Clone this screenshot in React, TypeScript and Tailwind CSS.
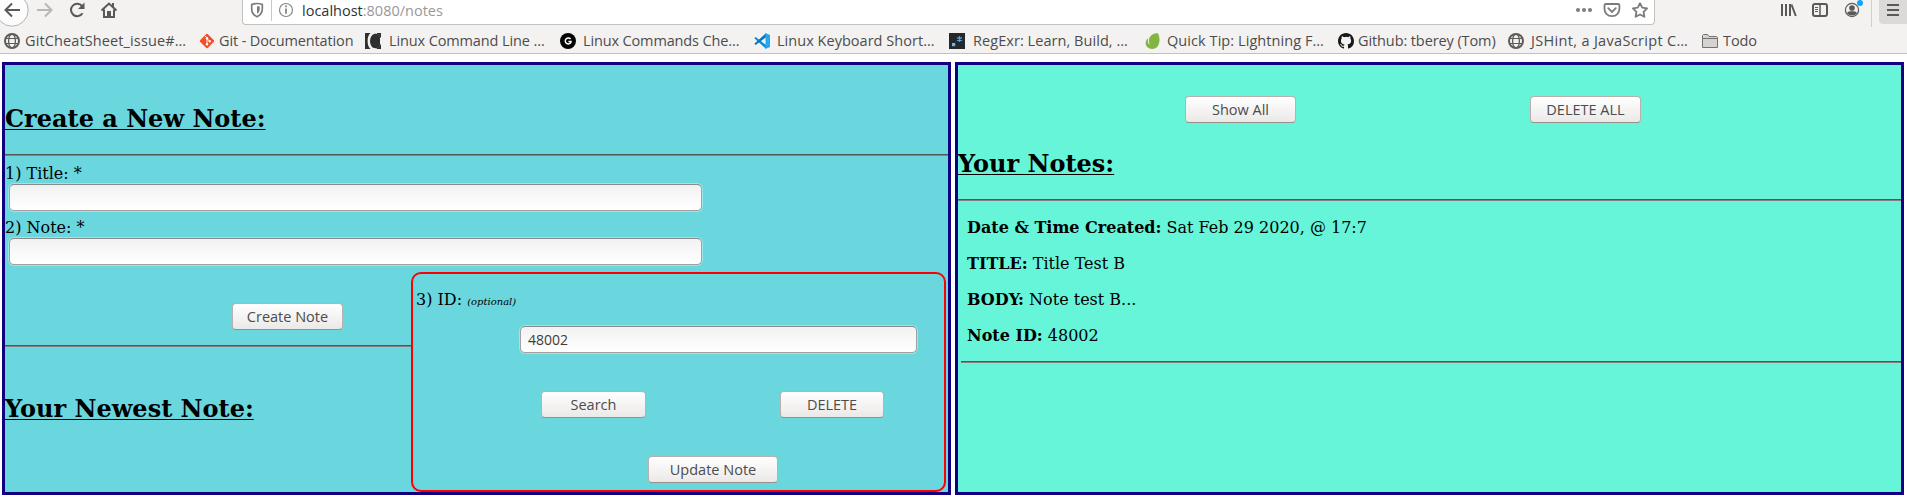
import React from "react";

const ui = "font-['Open_Sans','Noto_Sans',sans-serif]";

function Globe() {
  return (
    <svg width="16" height="16" viewBox="0 0 16 16" fill="none" stroke="#5e5d5b">
      <circle cx="8" cy="8" r="7" strokeWidth="2" />
      <ellipse cx="8" cy="8" rx="3.4" ry="7" strokeWidth="1.3" />
      <path d="M1.5 5.5h13M1.5 10.5h13" strokeWidth="1.2" />
    </svg>
  );
}

function GitLogo() {
  return (
    <svg width="16" height="16" viewBox="0 0 16 16">
      <rect x="2.6" y="2.6" width="10.8" height="10.8" rx="1" fill="#f64d27" transform="rotate(45 8 8)" />
      <path d="M6 2.8l2 2v6.6M8 5.6l3 3" stroke="#fff" strokeWidth="1" fill="none" />
      <circle cx="8" cy="5.2" r="1.2" fill="#fff" />
      <circle cx="8" cy="11.3" r="1.2" fill="#fff" />
      <circle cx="10.8" cy="8.3" r="1.2" fill="#fff" />
    </svg>
  );
}

function CommandLogo() {
  return (
    <svg width="16" height="16" viewBox="0 0 16 16">
      <path d="M0 0h5.500C3.400 2 2.600 4.500 2.600 8s.8 6 2.900 8H0z" fill="#2f2f2f" />
      <path d="M16 0v4.500h-1C14.600 2.500 13.600 1 12 1 9 0 5.500 2 5 8c.3 5.500 3 8 7 7 1.600-.4 2.600-1.500 3-3.500h1V16h-4V0z" fill="#2f2f2f" />
      <path d="M12 1c2 0 3 1.500 3 3.500v7c-.4 2-1.400 3.500-3 3.500z" fill="#2f2f2f" />
    </svg>
  );
}

function GLogo() {
  return (
    <svg width="16" height="16" viewBox="0 0 16 16">
      <circle cx="8" cy="8" r="8" fill="#050505" />
      <path d="M10.600 6A3 3 0 1 0 11 9.200V8.400H8.400" fill="none" stroke="#fff" strokeWidth="1.500" />
    </svg>
  );
}

function CodeLogo() {
  return (
    <svg width="16" height="16" viewBox="0 0 16 16">
      <path d="M0.300 5.200L1.700 4 12 12v3.800z" fill="#0d8bd4" />
      <path d="M0.300 10.800L1.700 12 12 4.200V0.200z" fill="#0877bd" />
      <path d="M11.500 0L16 1.900v12.200L11.500 16z" fill="#27a7f0" />
    </svg>
  );
}

function RegexLogo() {
  return (
    <svg width="16" height="16" viewBox="0 0 16 16">
      <path d="M0 0h16v16H0z" fill="#25292d" />
      <path d="M3 10h3.200v3.200H3z" fill="#70b7e8" />
      <path d="M10.500 3v6M8 4.500l5 3M13 4.500l-5 3" stroke="#5fa3d3" strokeWidth="1.300" />
    </svg>
  );
}

function LeafLogo() {
  return (
    <svg width="16" height="16" viewBox="0 0 16 16" fill="#82b541">
      <path d="M12.300.2C9 0 5.200 2.200 4.200 5.400c-.5 2-.2 4.200.3 5.600.2.500-.2.600-.5.200-.9-1-1.300-3.200-1-5.300.1-.5-.3-.6-.6-.2C.600 8-.2 11 1.600 13.300c2.600 3.500 8.600 3.400 11.100 0 2.800-4 1.800-10 .6-12.400-.2-.4-.5-.6-1-.7z" />
    </svg>
  );
}

function GithubLogo() {
  return (
    <svg width="16" height="16" viewBox="0 0 16 16" fill="#191717">
      <path d="M8 0C3.580 0 0 3.580 0 8c0 3.540 2.290 6.530 5.470 7.590.4.070.550-.170.550-.380 0-.190-.010-.820-.010-1.490-2.010.370-2.530-.490-2.690-.940-.090-.230-.480-.940-.820-1.130-.280-.150-.680-.520-.010-.530.630-.010 1.080.580 1.230.820.720 1.210 1.870.870 2.330.660.070-.520.280-.870.510-1.070-1.780-.2-3.640-.890-3.640-3.950 0-.870.310-1.590.820-2.150-.080-.2-.360-1.020.080-2.120 0 0 .670-.210 2.200.820a7.600 7.600 0 0 1 4 0c1.530-1.040 2.200-.820 2.200-.820.440 1.100.160 1.920.080 2.120.510.560.820 1.270.820 2.150 0 3.070-1.870 3.750-3.650 3.950.290.250.540.730.540 1.480 0 1.070-.010 1.930-.010 2.200 0 .210.150.460.550.380A8 8 0 0 0 16 8c0-4.420-3.580-8-8-8z" />
    </svg>
  );
}

function FolderIcon() {
  return (
    <svg width="16" height="16" viewBox="0 0 16 16">
      <path d="M.5 14.500V2.500L1.500 1.500h4l1.500 2h7.500l1 1v10z" fill="#d5d3d1" stroke="#737270" />
      <path d="M1 5.500h14" stroke="#737270" />
    </svg>
  );
}

const bookmarks = [
  { label: "GitCheatSheet_issue#…", Icon: Globe, box: "w-[195px] gap-[5px]", track: "tracking-[0.12px]" },
  { label: "Git - Documentation", Icon: GitLogo, box: "w-[166px] gap-[4px]", track: "tracking-[-0.12px]" },
  { label: "Linux Command Line …", Icon: CommandLogo, box: "w-[195px] gap-[8px]", track: "tracking-[-0.12px]" },
  { label: "Linux Commands Che…", Icon: GLogo, box: "w-[194px] gap-[7px]", track: "tracking-[-0.14px]" },
  { label: "Linux Keyboard Short…", Icon: CodeLogo, box: "w-[195px] gap-[7px]", track: "tracking-[0.03px]" },
  { label: "RegExr: Learn, Build, …", Icon: RegexLogo, box: "w-[196px] gap-[8px]", track: "tracking-[0.06px]" },
  { label: "Quick Tip: Lightning F…", Icon: LeafLogo, box: "w-[193px] gap-[6px]", track: "tracking-[0.07px]" },
  { label: "Github: tberey (Tom)", Icon: GithubLogo, box: "w-[170px] gap-[4px]", track: "tracking-[-0.1px]" },
  { label: "JSHint, a JavaScript C…", Icon: Globe, box: "w-[194px] gap-[7px]", track: "tracking-[0.33px]" },
  { label: "Todo", Icon: FolderIcon, box: "w-[80px] gap-[5px]", track: "tracking-[-0.1px]" },
];

function BrowserChrome() {
  return (
    <header className={`h-[54px] shrink-0 overflow-hidden border-b border-[#c3c1bf] bg-[#f4f2f1] ${ui}`}>
      <div className="flex h-[25px]">
        <svg width="130" height="27" viewBox="0 0 130 27" className="shrink-0 overflow-visible" fill="none" stroke="#5a5957" strokeWidth="2">
          <circle cx="12" cy="10" r="16.200" fill="#fcfcfc" stroke="#b4b2b0" strokeWidth="1" />
          <path d="M20 10H5.500M12 3.500L5.500 10l6.500 6.500" />
          <path d="M37 10h14.500M45 3.500l6.500 6.500-6.500 6.500" stroke="#b9b7b5" />
          <path d="M82.500 13.200A6.200 6.200 0 1 1 82 6" />
          <path d="M84.500 2.500v6.500H78z" fill="#5a5957" stroke="none" />
          <path d="M101.500 10.500L109 3.500l7.500 7M104 9.500V17h10V9.500" />
          <path d="M107 17v-6h4v6zM112 3h2v4h-2z" fill="#5a5957" stroke="none" />
        </svg>
        <div className="ml-[112px] flex h-[25px] w-[1413px] shrink-0 rounded-b-[4px] border border-t-0 border-[#c3c1bf] bg-white">
          <svg width="53" height="24" viewBox="0 0 53 24" className="ml-[6px] shrink-0" fill="none">
            <path d="M8 3.500c2 0 4 .4 5.300 1V9c0 4-2 6.200-5.300 7.700C4.700 15.200 2.700 13 2.700 9V4.500C4 3.900 6 3.500 8 3.500z" stroke="#7b7b7b" strokeWidth="1.700" />
            <path d="M8 6.200v7.600c1.800-1.200 2.700-2.700 2.700-4.900V6.600C10 6.300 9 6.200 8 6.200z" fill="#7b7b7b" />
            <path d="M22.500 0v21" stroke="#c8c8c8" />
            <circle cx="37" cy="10" r="6.500" stroke="#858585" strokeWidth="1.200" />
            <path d="M37 8.500v5.300M37 5.500v1.700" stroke="#777" strokeWidth="1.600" />
          </svg>
          <div className="h-5 pt-px text-[14.5px] leading-[20px] text-[#999]">
            <span className="text-[#2e3436]">localhost</span>:8080/notes
          </div>
          <svg width="80" height="24" viewBox="0 0 80 24" className="ml-auto shrink-0" fill="none" stroke="#7b7b7b" strokeWidth="1.800">
            <g fill="#7b7b7b" stroke="none">
              <circle cx="4" cy="10" r="2" /><circle cx="10" cy="10" r="2" /><circle cx="16" cy="10" r="2" />
            </g>
            <path d="M31.700 4h12.500c.8 0 1.200.4 1.200 1.200V9c0 4-3 7.200-7.400 7.200S30.500 13 30.500 9V5.200c0-.8.4-1.200 1.200-1.200z" />
            <path d="M34.200 8.200l3.800 3.700 3.800-3.700" strokeLinecap="round" />
            <path d="M66 3.200l2.200 4.500 4.900.7-3.500 3.500.8 4.900-4.400-2.300-4.400 2.300.8-4.900-3.500-3.500 4.900-.7z" strokeLinejoin="round" />
          </svg>
        </div>
        <svg width="252" height="27" viewBox="1655 0 252 27" className="shrink-0 overflow-visible" fill="none" stroke="#5a5957">
          <path d="M1782 4v12M1786 4v12M1790 4v12" strokeWidth="2" />
          <path d="M1791.500 4.500l4.300 11.500" strokeWidth="2" />
          <rect x="1813" y="4" width="14" height="12" rx="2" strokeWidth="2" />
          <path d="M1820 4v12" strokeWidth="1.500" />
          <path d="M1815 7.500h3M1815 9.500h3M1815 11.500h3" strokeWidth="1" />
          <circle cx="1852" cy="10" r="6.600" strokeWidth="1.200" />
          <circle cx="1852" cy="8" r="2.800" fill="#5a5957" stroke="none" />
          <path d="M1847 13c1-1.600 2.500-1.800 5-1.800s4 .2 5 1.800c-1.200 1.700-3 2.500-5 2.500s-3.800-.8-5-2.500z" fill="#5a5957" stroke="none" />
          <circle cx="1860" cy="3" r="3" fill="#0aa7ff" stroke="none" />
          <path d="M1871.500 0v27" stroke="#d0cecc" />
          <path d="M1879 0h28v24h-24q-4 0-4-4z" fill="#dcdad9" stroke="none" />
          <path d="M1887 5h12M1887 10h12M1887 15h12" strokeWidth="2" />
        </svg>
      </div>
      <nav className="flex h-[32px] items-center pl-1">
        {bookmarks.map(({ label, Icon, box, track }) => (
          <a key={label} className={`flex shrink-0 items-center whitespace-nowrap text-[14.5px] leading-[20px] text-[#4c4c4c] ${box}`}>
            <span className="shrink-0"><Icon /></span>
            <span className={track}>{label}</span>
          </a>
        ))}
      </nav>
    </header>
  );
}

function Rule({ className = "" }: { className?: string }) {
  return <div className={`h-[2px] border-t border-b border-t-[#555] border-b-[#888080] ${className}`} />;
}

function Button({ children, className = "" }: { children: React.ReactNode; className?: string }) {
  return (
    <button className={`h-[27px] shrink-0 rounded-[4px] border border-[#b9b1ae] border-b-[#98908c] bg-linear-to-b from-white to-[#ebe9e8] text-center text-[14.5px] leading-[24px] whitespace-nowrap text-[#4c4c4c] ${ui} ${className}`}>
      {children}
    </button>
  );
}

function TextInput({ value = "", className = "" }: { value?: string; className?: string }) {
  return (
    <input
      type="text"
      defaultValue={value}
      className={`block h-[27px] rounded-[5px] border border-[#a5a09d] border-t-[#8a8a8a] bg-linear-to-b from-[#f2f2f2] to-white px-[7px] text-[14px] text-[#3c3c3c] shadow-[0_0_0_1px_rgba(255,255,255,0.35)] outline-none ${ui} ${className}`}
    />
  );
}

function Heading({ children, className = "" }: { children: React.ReactNode; className?: string }) {
  return (
    <h2 className={`text-[24px] leading-[28px] font-bold whitespace-nowrap underline decoration-1 underline-offset-[2px] ${className}`}>{children}</h2>
  );
}

const note = [
  ["Date & Time Created:", "Sat Feb 29 2020, @ 17:7"],
  ["TITLE:", "Title Test B"],
  ["BODY:", "Note test B..."],
  ["Note ID:", "48002"],
];

export default function App() {
  return (
    <div className="flex h-[498px] w-[1907px] flex-col overflow-hidden bg-white font-['DejaVu_Serif',serif] text-[16px] leading-[20px] text-black">
      <BrowserChrome />
      <main className="flex gap-1 pt-2 pl-[2px]">
        <section className="relative h-[433px] w-[949px] border-[3px] border-[#120082] bg-[#6ad7de]">
          <Heading className="mt-[40px]">Create a New Note:</Heading>
          <Rule className="mt-[21px]" />
          <label className="mt-[8px] block h-[20px]">1) Title: *</label>
          <TextInput className="ml-1 w-[693px]" />
          <label className="mt-[7px] block h-[20px]">2) Note: *</label>
          <TextInput className="ml-1 w-[693px]" />
          <Button className="mt-[38px] ml-[227px] block w-[111px]">Create Note</Button>
          <Rule className="mt-[15px] w-[410px]" />
          <Heading className="mt-[48px]">Your Newest Note:</Heading>

          <div className="absolute top-[207px] left-[406px] h-[220px] w-[535px] rounded-[10px] border-2 border-[#fb0000] bg-[#6ad7de]">
            <label className="mt-[16px] ml-[3px] block h-[20px]">
              3) ID: <em className="text-[10px]">(optional)</em>
            </label>
            <TextInput value="48002" className="mt-[16px] ml-[107px] w-[397px]" />
            <div className="mt-[38px] ml-[128px] flex gap-[134px]">
              <Button className="w-[105px]">Search</Button>
              <Button className="w-[104px]">DELETE</Button>
            </div>
            <Button className="mt-[38px] ml-[235px] block w-[130px]">Update Note</Button>
          </div>
        </section>

        <section className="h-[433px] w-[949px] border-[3px] border-[#120082] bg-[#66f5d9]">
          <div className="mt-[31px] ml-[227px] flex gap-[234px]">
            <Button className="w-[111px]">Show All</Button>
            <Button className="w-[111px]">DELETE ALL</Button>
          </div>
          <Heading className="mt-[27px]">Your Notes:</Heading>
          <Rule className="mt-[21px]" />
          <div className="mt-[17px] ml-[9px] flex flex-col gap-4">
            {note.map(([name, text]) => (
              <p key={name} className="h-[20px]"><b>{name}</b> {text}</p>
            ))}
          </div>
          <Rule className="mt-[15px] ml-[3px]" />
        </section>
      </main>
    </div>
  );
}
